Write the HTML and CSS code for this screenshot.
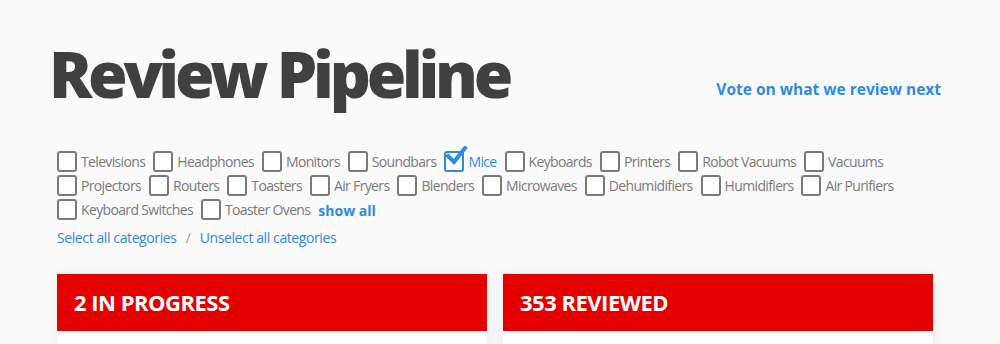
FILE: index.html
```html
<!DOCTYPE html>
<html lang="en">
<head>
  <meta charset="UTF-8">
  <title>Review Pipeline</title>
  <meta name="viewport" content="width=device-width,initial-scale=1">
  <link rel="stylesheet" href="styles.css">
</head>
<body>
  <div class="page">
    <div class="page-header">
      <h1 class="page-title">Review Pipeline</h1>
      <a class="vote-link" href="#">Vote on what we review next</a>
    </div>

    <div class="filters">
      <div class="category-list">
        <label class="category"><span class="box"></span>Televisions</label>
        <label class="category"><span class="box"></span>Headphones</label>
        <label class="category"><span class="box"></span>Monitors</label>
        <label class="category"><span class="box"></span>Soundbars</label>
        <label class="category checked"><span class="box"><svg class="tick" viewBox="0 0 24 22" width="24" height="22"><path d="M4 10 L10 16 L21 2" fill="none" stroke="#2f8ae0" stroke-width="4" stroke-linecap="square"/></svg></span>Mice</label>
        <label class="category"><span class="box"></span>Keyboards</label>
        <label class="category"><span class="box"></span>Printers</label>
        <label class="category"><span class="box"></span>Robot Vacuums</label>
        <label class="category"><span class="box"></span>Vacuums</label>
        <label class="category"><span class="box"></span>Projectors</label>
        <label class="category"><span class="box"></span>Routers</label>
        <label class="category"><span class="box"></span>Toasters</label>
        <label class="category"><span class="box"></span>Air Fryers</label>
        <label class="category"><span class="box"></span>Blenders</label>
        <label class="category"><span class="box"></span>Microwaves</label>
        <label class="category"><span class="box"></span>Dehumidifiers</label>
        <label class="category"><span class="box"></span>Humidifiers</label>
        <label class="category"><span class="box"></span>Air Purifiers</label>
        <label class="category"><span class="box"></span>Keyboard Switches</label>
        <label class="category"><span class="box"></span>Toaster Ovens</label>
        <a class="show-all" href="#">show all</a>
      </div>
      <div class="select-links">
        <a href="#">Select all categories</a>
        <span class="sep">/</span>
        <a href="#">Unselect all categories</a>
      </div>
    </div>

    <div class="columns">
      <div class="column">
        <div class="column-head">2 IN PROGRESS</div>
        <div class="column-body"></div>
      </div>
      <div class="column">
        <div class="column-head">353 REVIEWED</div>
        <div class="column-body"></div>
      </div>
    </div>
  </div>
</body>
</html>
```

FILE: styles.css
```css
html, body {
  margin: 0;
  padding: 0;
  background: #fafafa;
  font-family: 'Open Sans', 'Noto Sans', sans-serif;
  color: #7a7a7a;
}
a {
  color: #2f8ae0;
  text-decoration: none;
}

.page {
  width: 888px;
  margin-left: 53px;
  padding-top: 34px;
}

.page-header {
  display: flex;
  justify-content: space-between;
  align-items: flex-end;
}
.page-title {
  margin: 0 0 0 -4px;
  font-size: 64px;
  font-weight: 800;
  letter-spacing: -4.2px;
  color: #404040;
  line-height: 80px;
}
.vote-link {
  font-size: 15.5px;
  font-weight: 700;
  line-height: 20px;
  margin-bottom: 15px;
}

.filters {
  padding: 35px 0 0 4px;
}
.category-list {
  display: flex;
  flex-wrap: wrap;
  align-items: center;
  column-gap: 8px;
  width: 860px;
}
.category {
  display: flex;
  align-items: center;
  gap: 4px;
  height: 24px;
  font-size: 14px;
  letter-spacing: -0.65px;
  cursor: pointer;
}
.category .box {
  position: relative;
  width: 16px;
  height: 17px;
  border: 2px solid #7a7a7a;
  border-radius: 3px;
  background: #fff;
}
.category.checked {
  color: #2f8ae0;
}
.category.checked .box {
  border-color: #2f8ae0;
}
.category .tick {
  position: absolute;
  left: -2px;
  top: -7px;
}
.show-all {
  font-size: 14px;
  font-weight: 700;
  padding-top: 3px;
}

.select-links {
  font-size: 14px;
  letter-spacing: -0.4px;
  padding-top: 6px;
  line-height: 22px;
}
.select-links .sep {
  color: #999;
  margin: 0 6px;
}

.columns {
  display: grid;
  grid-template-columns: 430px 430px;
  column-gap: 16px;
  margin-top: 25px;
  padding-left: 4px;
}
.column {
  background: #fff;
  box-shadow: 0 0 14px rgba(0, 0, 0, 0.07);
}
.column-head {
  background: #e50000;
  color: #fff;
  font-size: 22px;
  font-weight: 700;
  letter-spacing: -0.5px;
  height: 57px;
  line-height: 57px;
  padding-left: 17px;
}
.column-body {
  height: 120px;
}
```
